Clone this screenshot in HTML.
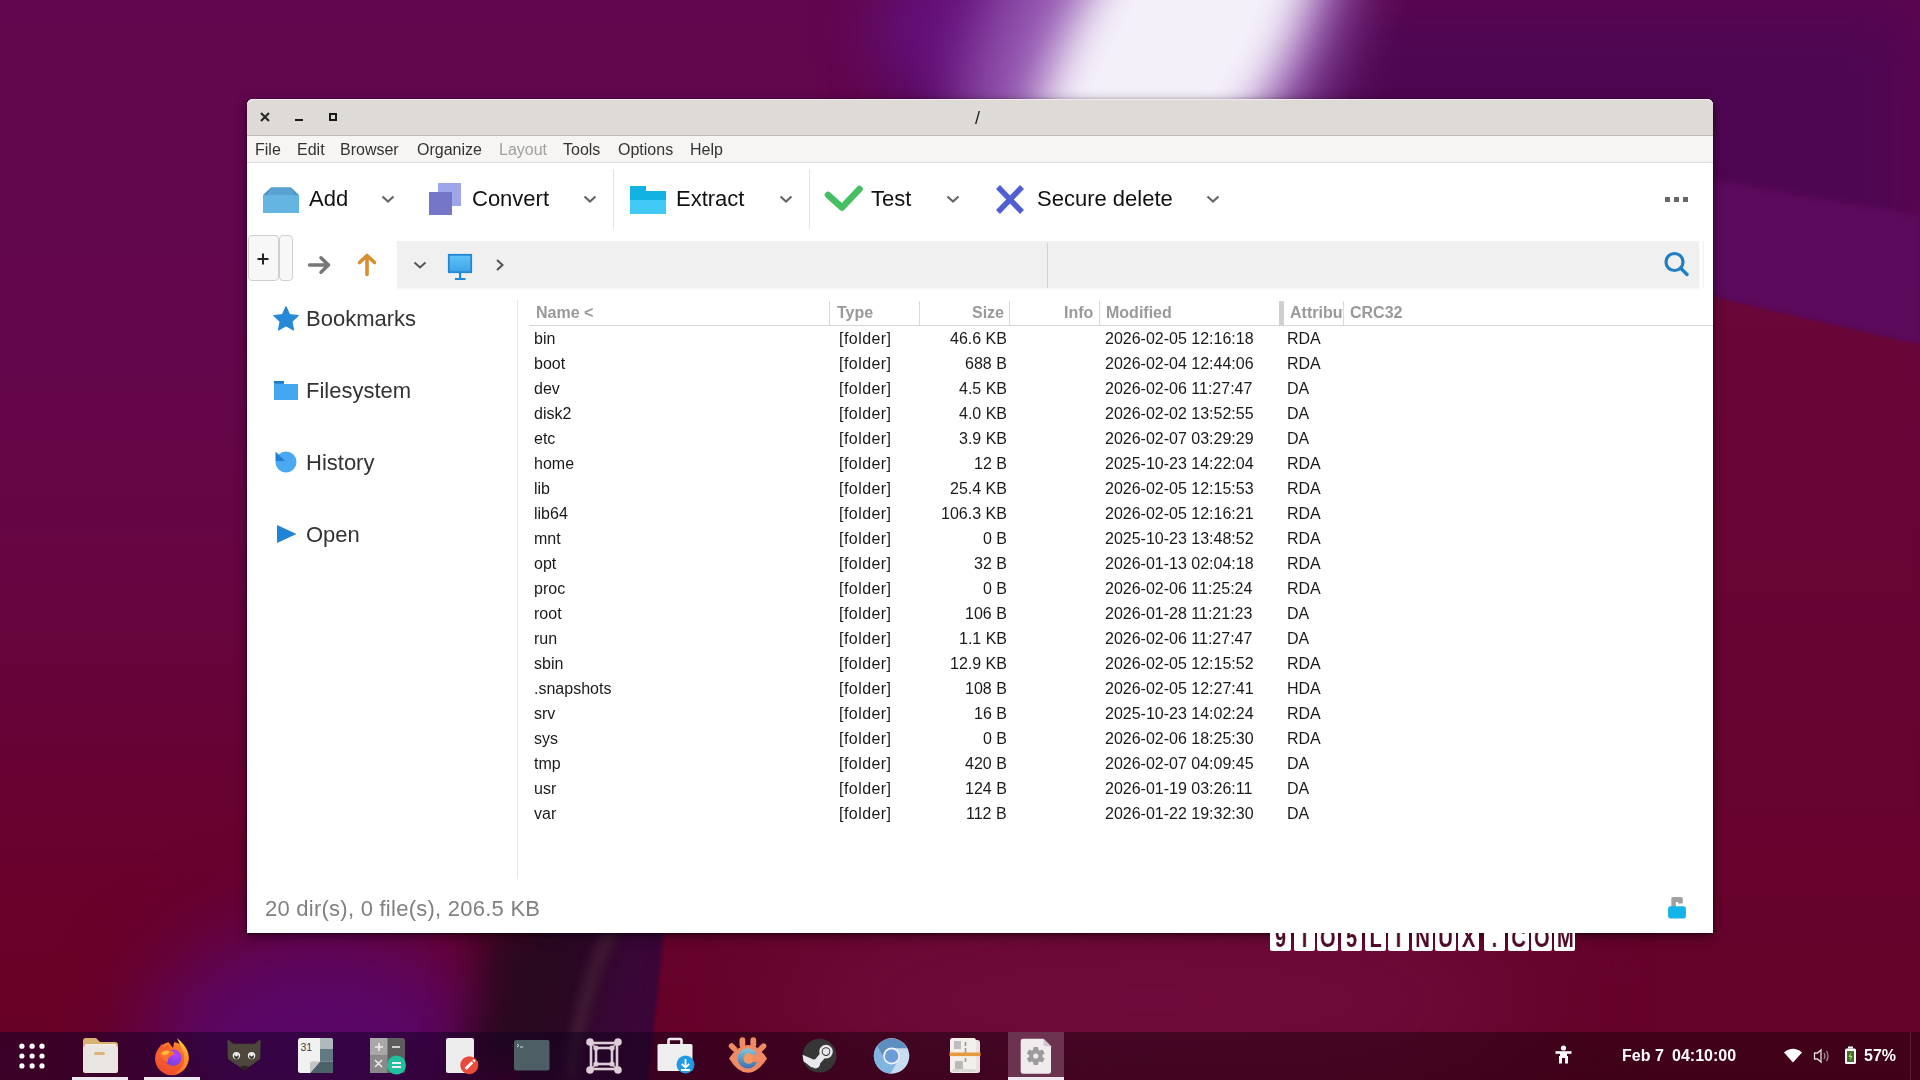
<!DOCTYPE html><html><head><meta charset="utf-8"><style>
html,body{margin:0;padding:0;}
body{width:1920px;height:1080px;overflow:hidden;position:relative;font-family:"Liberation Sans", sans-serif;background:#640a50;}
.t{position:absolute;white-space:nowrap;line-height:normal;will-change:transform;}
</style></head><body>
<svg style="position:absolute;left:0;top:0" width="1920" height="1080" viewBox="0 0 1920 1080">
<defs>
<linearGradient id="gl" x1="0" y1="0" x2="0" y2="1">
<stop offset="0" stop-color="#62064f"/><stop offset="0.3" stop-color="#63064c"/><stop offset="0.55" stop-color="#660540"/><stop offset="0.75" stop-color="#680230"/><stop offset="0.9" stop-color="#690026"/><stop offset="1" stop-color="#660226"/>
</linearGradient>
<linearGradient id="gr" x1="0" y1="0" x2="0" y2="1">
<stop offset="0" stop-color="#6a0638"/><stop offset="0.45" stop-color="#680432"/><stop offset="1" stop-color="#650228"/>
</linearGradient>
<filter id="b30_1" color-interpolation-filters="sRGB" filterUnits="userSpaceOnUse" x="-300" y="-300" width="2520" height="1680"><feGaussianBlur stdDeviation="30"/></filter>
<filter id="b4_2" color-interpolation-filters="sRGB" filterUnits="userSpaceOnUse" x="-300" y="-300" width="2520" height="1680"><feGaussianBlur stdDeviation="3"/></filter>
<filter id="b30_3" color-interpolation-filters="sRGB" filterUnits="userSpaceOnUse" x="-300" y="-300" width="2520" height="1680"><feGaussianBlur stdDeviation="30"/></filter>
<filter id="b4_4" color-interpolation-filters="sRGB" filterUnits="userSpaceOnUse" x="-300" y="-300" width="2520" height="1680"><feGaussianBlur stdDeviation="3"/></filter>
<filter id="b60_5" color-interpolation-filters="sRGB" filterUnits="userSpaceOnUse" x="-300" y="-300" width="2520" height="1680"><feGaussianBlur stdDeviation="60"/></filter>
<filter id="b60_6" color-interpolation-filters="sRGB" filterUnits="userSpaceOnUse" x="-300" y="-300" width="2520" height="1680"><feGaussianBlur stdDeviation="60"/></filter>
<filter id="b25_7" color-interpolation-filters="sRGB" filterUnits="userSpaceOnUse" x="-300" y="-300" width="2520" height="1680"><feGaussianBlur stdDeviation="22"/></filter>
<filter id="b4_8" color-interpolation-filters="sRGB" filterUnits="userSpaceOnUse" x="-300" y="-300" width="2520" height="1680"><feGaussianBlur stdDeviation="3"/></filter>
<filter id="b30_9" color-interpolation-filters="sRGB" filterUnits="userSpaceOnUse" x="-300" y="-300" width="2520" height="1680"><feGaussianBlur stdDeviation="30"/></filter>
<filter id="b25_10" color-interpolation-filters="sRGB" filterUnits="userSpaceOnUse" x="-300" y="-300" width="2520" height="1680"><feGaussianBlur stdDeviation="22"/></filter>
<filter id="bx1" color-interpolation-filters="sRGB" filterUnits="userSpaceOnUse" x="-300" y="-300" width="2520" height="1680"><feGaussianBlur stdDeviation="45"/></filter>
<filter id="bx2" color-interpolation-filters="sRGB" filterUnits="userSpaceOnUse" x="-300" y="-300" width="2520" height="1680"><feGaussianBlur stdDeviation="22"/></filter>
<filter id="bx3" color-interpolation-filters="sRGB" filterUnits="userSpaceOnUse" x="-300" y="-300" width="2520" height="1680"><feGaussianBlur stdDeviation="5"/></filter>
<filter id="bx4" color-interpolation-filters="sRGB" filterUnits="userSpaceOnUse" x="-300" y="-300" width="2520" height="1680"><feGaussianBlur stdDeviation="1.5"/></filter>
<filter id="bx5" color-interpolation-filters="sRGB" filterUnits="userSpaceOnUse" x="-300" y="-300" width="2520" height="1680"><feGaussianBlur stdDeviation="60"/></filter>
</defs>
<rect width="1920" height="1080" fill="url(#gl)"/>
<!-- dark purple top right -->
<path d="M900 0 H1920 V345 L1713 297 L1300 200 L900 120 Z" fill="#4f0652" filter="url(#b30_1)"/>
<!-- lighter purple band right -->
<path d="M1713 180 L1920 215 L1920 345 L1713 297 L1400 230 L1400 150 Z" fill="#5c0a5c" filter="url(#b4_2)"/>
<!-- violet left of glow -->
<ellipse cx="995" cy="30" rx="120" ry="90" fill="#64107a" filter="url(#b30_3)"/>
<!-- purple blob bottom left -->
<ellipse cx="320" cy="1040" rx="175" ry="115" fill="#5a0668" filter="url(#bx1)"/>
<!-- dark purple band -->
<path d="M540 900 L700 900 L652 1080 L520 1080 Z" fill="#3a0738"/>
<!-- dark shadow crescent -->
<path d="M480 920 Q580 915 612 925 Q585 990 570 1080 L455 1080 Q490 1000 480 920 Z" fill="#28081f" filter="url(#bx2)"/>
<path d="M612 930 Q583 985 570 1080" fill="none" stroke="#3f1a32" stroke-width="14" filter="url(#bx3)"/>
<!-- crimson lower right -->
<path d="M1920 345 L1713 297 C1300 220 800 400 664 930 L648 1080 H1920 Z" fill="url(#gr)" filter="url(#bx4)"/>
<!-- magenta lighter lower mid -->
<ellipse cx="1150" cy="1000" rx="380" ry="90" fill="#700c3c" filter="url(#bx5)"/>
<!-- glow -->
<g transform="rotate(31 1172 40)">
<ellipse cx="1160" cy="40" rx="165" ry="270" fill="#9a60b8" filter="url(#b30_9)" opacity="0.9"/>
<ellipse cx="1178" cy="40" rx="102" ry="230" fill="#f4f0fa" filter="url(#b25_10)"/>
</g>
</svg><div style="position:absolute;left:247px;top:99px;width:1466px;height:834px;border-radius:6px 6px 0 0;box-shadow:0 3px 12px rgba(0,0,0,0.5),0 1px 3px rgba(0,0,0,0.4);background:#fff;"></div><div style="position:absolute;left:1270px;top:915px;width:21px;height:36px;background:#fff;border-radius:2px;overflow:hidden;"><div class="t" style="left:0;width:21px;text-align:center;top:7px;font-size:28px;font-weight:bold;color:#4e0a28;transform:scaleX(0.72);">9</div></div><div style="position:absolute;left:1294px;top:915px;width:21px;height:36px;background:#fff;border-radius:2px;overflow:hidden;"><div class="t" style="left:0;width:21px;text-align:center;top:7px;font-size:28px;font-weight:bold;color:#4e0a28;transform:scaleX(0.72);">T</div></div><div style="position:absolute;left:1317px;top:915px;width:21px;height:36px;background:#fff;border-radius:2px;overflow:hidden;"><div class="t" style="left:0;width:21px;text-align:center;top:7px;font-size:28px;font-weight:bold;color:#4e0a28;transform:scaleX(0.72);">O</div></div><div style="position:absolute;left:1341px;top:915px;width:21px;height:36px;background:#fff;border-radius:2px;overflow:hidden;"><div class="t" style="left:0;width:21px;text-align:center;top:7px;font-size:28px;font-weight:bold;color:#4e0a28;transform:scaleX(0.72);">5</div></div><div style="position:absolute;left:1365px;top:915px;width:21px;height:36px;background:#fff;border-radius:2px;overflow:hidden;"><div class="t" style="left:0;width:21px;text-align:center;top:7px;font-size:28px;font-weight:bold;color:#4e0a28;transform:scaleX(0.72);">L</div></div><div style="position:absolute;left:1388px;top:915px;width:21px;height:36px;background:#fff;border-radius:2px;overflow:hidden;"><div class="t" style="left:0;width:21px;text-align:center;top:7px;font-size:28px;font-weight:bold;color:#4e0a28;transform:scaleX(0.72);">I</div></div><div style="position:absolute;left:1412px;top:915px;width:21px;height:36px;background:#fff;border-radius:2px;overflow:hidden;"><div class="t" style="left:0;width:21px;text-align:center;top:7px;font-size:28px;font-weight:bold;color:#4e0a28;transform:scaleX(0.72);">N</div></div><div style="position:absolute;left:1435px;top:915px;width:21px;height:36px;background:#fff;border-radius:2px;overflow:hidden;"><div class="t" style="left:0;width:21px;text-align:center;top:7px;font-size:28px;font-weight:bold;color:#4e0a28;transform:scaleX(0.72);">U</div></div><div style="position:absolute;left:1458px;top:915px;width:21px;height:36px;background:#fff;border-radius:2px;overflow:hidden;"><div class="t" style="left:0;width:21px;text-align:center;top:7px;font-size:28px;font-weight:bold;color:#4e0a28;transform:scaleX(0.72);">X</div></div><div style="position:absolute;left:1484px;top:915px;width:21px;height:36px;background:#fff;border-radius:2px;overflow:hidden;"><div class="t" style="left:0;width:21px;text-align:center;top:7px;font-size:28px;font-weight:bold;color:#4e0a28;transform:scaleX(0.72);">.</div></div><div style="position:absolute;left:1508px;top:915px;width:21px;height:36px;background:#fff;border-radius:2px;overflow:hidden;"><div class="t" style="left:0;width:21px;text-align:center;top:7px;font-size:28px;font-weight:bold;color:#4e0a28;transform:scaleX(0.72);">C</div></div><div style="position:absolute;left:1531px;top:915px;width:21px;height:36px;background:#fff;border-radius:2px;overflow:hidden;"><div class="t" style="left:0;width:21px;text-align:center;top:7px;font-size:28px;font-weight:bold;color:#4e0a28;transform:scaleX(0.72);">O</div></div><div style="position:absolute;left:1554px;top:915px;width:21px;height:36px;background:#fff;border-radius:2px;overflow:hidden;"><div class="t" style="left:0;width:21px;text-align:center;top:7px;font-size:28px;font-weight:bold;color:#4e0a28;transform:scaleX(0.72);">M</div></div><div style="position:absolute;left:247px;top:99px;width:1466px;height:834px;border-radius:6px 6px 0 0;background:#fff;"></div><div style="position:absolute;left:247px;top:99px;width:1466px;height:36px;border-radius:6px 6px 0 0;background:#dedad6;box-shadow:inset 0 1px 0 rgba(255,240,255,0.7);"></div><div style="position:absolute;left:247px;top:135px;width:1466px;height:27px;background:#f6f5f4;border-top:1px solid #c2bdb8;box-sizing:border-box;"></div><div style="position:absolute;left:247px;top:162px;width:1466px;height:1px;background:#dcdcdc;"></div><svg style="position:absolute;left:259px;top:111px;" width="12" height="12" viewBox="0 0 12 12"><path d="M2 2 L10 10 M10 2 L2 10" stroke="#2a2a2a" stroke-width="2.2" stroke-linecap="butt"/></svg><div style="position:absolute;left:295px;top:119px;width:8px;height:2px;background:#1a1a1a;"></div><div style="position:absolute;left:329px;top:113px;width:8px;height:8px;border:2px solid #1a1a1a;box-sizing:border-box;"></div><div class="t " style="left:975px;top:108px;font-size:18px;color:#222;font-weight:normal;">/</div><div class="t " style="left:255px;top:141px;font-size:16px;color:#333;font-weight:normal;">File</div><div class="t " style="left:297px;top:141px;font-size:16px;color:#333;font-weight:normal;">Edit</div><div class="t " style="left:340px;top:141px;font-size:16px;color:#333;font-weight:normal;">Browser</div><div class="t " style="left:417px;top:141px;font-size:16px;color:#333;font-weight:normal;">Organize</div><div class="t " style="left:499px;top:141px;font-size:16px;color:#a0a0a0;font-weight:normal;">Layout</div><div class="t " style="left:563px;top:141px;font-size:16px;color:#333;font-weight:normal;">Tools</div><div class="t " style="left:618px;top:141px;font-size:16px;color:#333;font-weight:normal;">Options</div><div class="t " style="left:690px;top:141px;font-size:16px;color:#333;font-weight:normal;">Help</div><div style="position:absolute;left:613px;top:169px;width:1px;height:60px;background:#e4e4e4;"></div><div style="position:absolute;left:809px;top:169px;width:1px;height:60px;background:#e4e4e4;"></div><svg style="position:absolute;left:263px;top:187px;" width="36" height="26" viewBox="0 0 36 26"><path d="M0 8 L8 0.5 L28 0.5 L36 8 Z" fill="#4a93c0"/><path d="M4 8 L8 0.5 L28 0.5 L32 8 Z" fill="#5aa2cf"/><rect x="0" y="8" width="36" height="18" fill="#64b5e2"/></svg><div class="t " style="left:309px;top:186px;font-size:22px;color:#111;font-weight:normal;">Add</div><svg style="position:absolute;left:381px;top:194px;" width="14" height="10" viewBox="0 0 14 10"><path d="M1.5 2.5 L7.0 7.5 L12.5 2.5" fill="none" stroke="#666" stroke-width="2.2" stroke-linecap="butt" stroke-linejoin="miter"/></svg><svg style="position:absolute;left:429px;top:183px;" width="32" height="32" viewBox="0 0 32 32"><rect x="9" y="0" width="23" height="23" fill="#9ea6ea"/><rect x="0" y="9" width="23" height="23" fill="#7676c8"/></svg><div class="t " style="left:472px;top:186px;font-size:22px;color:#111;font-weight:normal;">Convert</div><svg style="position:absolute;left:583px;top:194px;" width="14" height="10" viewBox="0 0 14 10"><path d="M1.5 2.5 L7.0 7.5 L12.5 2.5" fill="none" stroke="#666" stroke-width="2.2" stroke-linecap="butt" stroke-linejoin="miter"/></svg><svg style="position:absolute;left:630px;top:186px;" width="36" height="28" viewBox="0 0 36 28"><path d="M0 0 H16 V5 H36 V14 H0 Z" fill="#12b2e2"/><rect x="0" y="14" width="36" height="14" fill="#42c8f4"/></svg><div class="t " style="left:676px;top:186px;font-size:22px;color:#111;font-weight:normal;">Extract</div><svg style="position:absolute;left:779px;top:194px;" width="14" height="10" viewBox="0 0 14 10"><path d="M1.5 2.5 L7.0 7.5 L12.5 2.5" fill="none" stroke="#666" stroke-width="2.2" stroke-linecap="butt" stroke-linejoin="miter"/></svg><svg style="position:absolute;left:824px;top:185px;" width="40" height="28" viewBox="0 0 40 28"><path d="M4 10 L18 22.5 L35.5 4" fill="none" stroke="#46bf63" stroke-width="6.5" stroke-linecap="round" stroke-linejoin="round"/></svg><div class="t " style="left:871px;top:186px;font-size:22px;color:#111;font-weight:normal;">Test</div><svg style="position:absolute;left:946px;top:194px;" width="14" height="10" viewBox="0 0 14 10"><path d="M1.5 2.5 L7.0 7.5 L12.5 2.5" fill="none" stroke="#666" stroke-width="2.2" stroke-linecap="butt" stroke-linejoin="miter"/></svg><svg style="position:absolute;left:994px;top:183px;" width="32" height="33" viewBox="0 0 32 33"><path d="M4 4 L28 29 M28 4 L4 29" stroke="#4f5fd2" stroke-width="5.5" stroke-linecap="butt"/></svg><div class="t " style="left:1037px;top:186px;font-size:22px;color:#111;font-weight:normal;">Secure delete</div><svg style="position:absolute;left:1206px;top:194px;" width="14" height="10" viewBox="0 0 14 10"><path d="M1.5 2.5 L7.0 7.5 L12.5 2.5" fill="none" stroke="#666" stroke-width="2.2" stroke-linecap="butt" stroke-linejoin="miter"/></svg><div style="position:absolute;left:1665px;top:197px;width:5px;height:5px;background:#666;"></div><div style="position:absolute;left:1674px;top:197px;width:5px;height:5px;background:#666;"></div><div style="position:absolute;left:1683px;top:197px;width:5px;height:5px;background:#666;"></div><div style="position:absolute;left:248px;top:235px;width:31px;height:46px;border:1px solid #cfcfcf;border-radius:4px;background:#f7f7f7;box-sizing:border-box;"></div><div style="position:absolute;left:279px;top:235px;width:14px;height:46px;border:1px solid #cfcfcf;border-radius:4px;background:#f7f7f7;box-sizing:border-box;"></div><svg style="position:absolute;left:257px;top:253px;" width="12" height="12" viewBox="0 0 12 12"><path d="M6 0.5 V11.5 M0.5 6 H11.5" stroke="#222" stroke-width="2"/></svg><svg style="position:absolute;left:307px;top:255px;" width="25" height="20" viewBox="0 0 25 20"><path d="M2.5 10 H21.5 M14 2.8 L21.5 10 L14 17.2" fill="none" stroke="#777" stroke-width="3.5" stroke-linecap="round" stroke-linejoin="round"/></svg><svg style="position:absolute;left:356px;top:252px;" width="22" height="25" viewBox="0 0 22 25"><path d="M11 22.5 V3.5 M3.5 10.5 L11 3.5 L18.5 10.5" fill="none" stroke="#d88e2e" stroke-width="3.6" stroke-linecap="round" stroke-linejoin="round"/></svg><div style="position:absolute;left:397px;top:241px;width:1302px;height:47px;background:#f0f0f0;box-shadow:0 1px 2px rgba(0,0,0,0.05);"></div><div style="position:absolute;left:1047px;top:243px;width:1px;height:45px;background:#d0d0d0;"></div><svg style="position:absolute;left:413px;top:260px;" width="14" height="10" viewBox="0 0 14 10"><path d="M1.5 2.5 L7.0 7.5 L12.5 2.5" fill="none" stroke="#555" stroke-width="2" stroke-linecap="butt" stroke-linejoin="miter"/></svg><svg style="position:absolute;left:447px;top:253px;" width="27" height="29" viewBox="0 0 27 29"><defs><linearGradient id="mon" x1="0" y1="0" x2="0" y2="1"><stop offset="0" stop-color="#62c4f6"/><stop offset="1" stop-color="#3ba4e8"/></linearGradient></defs><rect x="1.8" y="1.8" width="22.4" height="17.4" fill="url(#mon)" stroke="#2388d2" stroke-width="1.8"/><rect x="12" y="19" width="2.2" height="6" fill="#2388d2"/><rect x="8" y="25" width="10.5" height="2" fill="#2388d2"/></svg><svg style="position:absolute;left:495px;top:258px;" width="10" height="14" viewBox="0 0 10 14"><path d="M2 2 L7.5 7 L2 12" fill="none" stroke="#555" stroke-width="2"/></svg><svg style="position:absolute;left:1660px;top:248px;" width="32" height="32" viewBox="0 0 32 32"><circle cx="14.5" cy="14" r="8.5" fill="none" stroke="#1f7fc2" stroke-width="3.2"/><path d="M20.5 20 L27 26.5" stroke="#1f7fc2" stroke-width="3.4" stroke-linecap="round"/></svg><div style="position:absolute;left:1703px;top:241px;width:1px;height:47px;background:#f2f2f2;"></div><div style="position:absolute;left:517px;top:300px;width:1px;height:579px;background:#e6e6e6;"></div><svg style="position:absolute;left:272px;top:305px;" width="28" height="28" viewBox="0 0 28 28"><polygon points="14.00,1.80 17.59,9.66 26.17,10.64 19.80,16.49 21.52,24.96 14.00,20.70 6.48,24.96 8.20,16.49 1.83,10.64 10.41,9.66" fill="#2588d8" stroke="#2588d8" stroke-width="1.2" stroke-linejoin="round"/></svg><div class="t " style="left:306px;top:306px;font-size:22px;color:#333;font-weight:normal;">Bookmarks</div><svg style="position:absolute;left:274px;top:381px;" width="24" height="19" viewBox="0 0 24 19"><path d="M0 0.5 H10 V3 H24 V19 H0 Z" fill="#44a6f0"/><rect x="0" y="0" width="10" height="2.6" fill="#1e78c2"/></svg><div class="t " style="left:306px;top:378px;font-size:22px;color:#333;font-weight:normal;">Filesystem</div><svg style="position:absolute;left:274px;top:450px;" width="24" height="24" viewBox="0 0 24 24"><circle cx="12" cy="12" r="10.5" fill="#4aa9f1"/><path d="M1.5 1.5 L1.5 11 L11 11 Z" fill="#1e80d2"/></svg><div class="t " style="left:306px;top:450px;font-size:22px;color:#333;font-weight:normal;">History</div><svg style="position:absolute;left:276px;top:524px;" width="22" height="20" viewBox="0 0 22 20"><path d="M1 1 L20.5 10 L1 19 Z" fill="#1f83d8"/></svg><div class="t " style="left:306px;top:522px;font-size:22px;color:#333;font-weight:normal;">Open</div><div style="position:absolute;left:529px;top:325px;width:1184px;height:1px;background:#d6d6d6;"></div><div style="position:absolute;left:829px;top:301px;width:1px;height:24px;background:#dadada;"></div><div style="position:absolute;left:919px;top:301px;width:1px;height:24px;background:#dadada;"></div><div style="position:absolute;left:1009px;top:301px;width:1px;height:24px;background:#dadada;"></div><div style="position:absolute;left:1099px;top:301px;width:1px;height:24px;background:#dadada;"></div><div style="position:absolute;left:1343px;top:301px;width:1px;height:24px;background:#dadada;"></div><div style="position:absolute;left:1279px;top:301px;width:5px;height:24px;background:#cfcfcf;"></div><div class="t " style="left:536px;top:304px;font-size:16px;color:#999;font-weight:bold;">Name &lt;</div><div class="t " style="left:837px;top:304px;font-size:16px;color:#999;font-weight:bold;">Type</div><div class="t " style="right:916px;top:304px;font-size:16px;color:#999;font-weight:bold;">Size</div><div class="t " style="right:827px;top:304px;font-size:16px;color:#999;font-weight:bold;">Info</div><div class="t " style="left:1106px;top:304px;font-size:16px;color:#999;font-weight:bold;">Modified</div><div style="position:absolute;left:1290px;top:300px;width:53px;height:24px;overflow:hidden;"><div class="t" style="left:0;top:4px;font-size:16px;color:#999;font-weight:bold;">Attributes</div></div><div class="t " style="left:1350px;top:304px;font-size:16px;color:#999;font-weight:bold;">CRC32</div><div class="t " style="left:534px;top:330px;font-size:16px;color:#1a1a1a;font-weight:normal;">bin</div><div class="t " style="left:839px;top:330px;font-size:16px;color:#1a1a1a;font-weight:normal;letter-spacing:0.45px;">[folder]</div><div class="t " style="right:913px;top:330px;font-size:16px;color:#1a1a1a;font-weight:normal;">46.6 KB</div><div class="t " style="left:1105px;top:330px;font-size:16px;color:#1a1a1a;font-weight:normal;">2026-02-05 12:16:18</div><div class="t " style="left:1287px;top:330px;font-size:16px;color:#1a1a1a;font-weight:normal;">RDA</div><div class="t " style="left:534px;top:355px;font-size:16px;color:#1a1a1a;font-weight:normal;">boot</div><div class="t " style="left:839px;top:355px;font-size:16px;color:#1a1a1a;font-weight:normal;letter-spacing:0.45px;">[folder]</div><div class="t " style="right:913px;top:355px;font-size:16px;color:#1a1a1a;font-weight:normal;">688 B</div><div class="t " style="left:1105px;top:355px;font-size:16px;color:#1a1a1a;font-weight:normal;">2026-02-04 12:44:06</div><div class="t " style="left:1287px;top:355px;font-size:16px;color:#1a1a1a;font-weight:normal;">RDA</div><div class="t " style="left:534px;top:380px;font-size:16px;color:#1a1a1a;font-weight:normal;">dev</div><div class="t " style="left:839px;top:380px;font-size:16px;color:#1a1a1a;font-weight:normal;letter-spacing:0.45px;">[folder]</div><div class="t " style="right:913px;top:380px;font-size:16px;color:#1a1a1a;font-weight:normal;">4.5 KB</div><div class="t " style="left:1105px;top:380px;font-size:16px;color:#1a1a1a;font-weight:normal;">2026-02-06 11:27:47</div><div class="t " style="left:1287px;top:380px;font-size:16px;color:#1a1a1a;font-weight:normal;">DA</div><div class="t " style="left:534px;top:405px;font-size:16px;color:#1a1a1a;font-weight:normal;">disk2</div><div class="t " style="left:839px;top:405px;font-size:16px;color:#1a1a1a;font-weight:normal;letter-spacing:0.45px;">[folder]</div><div class="t " style="right:913px;top:405px;font-size:16px;color:#1a1a1a;font-weight:normal;">4.0 KB</div><div class="t " style="left:1105px;top:405px;font-size:16px;color:#1a1a1a;font-weight:normal;">2026-02-02 13:52:55</div><div class="t " style="left:1287px;top:405px;font-size:16px;color:#1a1a1a;font-weight:normal;">DA</div><div class="t " style="left:534px;top:430px;font-size:16px;color:#1a1a1a;font-weight:normal;">etc</div><div class="t " style="left:839px;top:430px;font-size:16px;color:#1a1a1a;font-weight:normal;letter-spacing:0.45px;">[folder]</div><div class="t " style="right:913px;top:430px;font-size:16px;color:#1a1a1a;font-weight:normal;">3.9 KB</div><div class="t " style="left:1105px;top:430px;font-size:16px;color:#1a1a1a;font-weight:normal;">2026-02-07 03:29:29</div><div class="t " style="left:1287px;top:430px;font-size:16px;color:#1a1a1a;font-weight:normal;">DA</div><div class="t " style="left:534px;top:455px;font-size:16px;color:#1a1a1a;font-weight:normal;">home</div><div class="t " style="left:839px;top:455px;font-size:16px;color:#1a1a1a;font-weight:normal;letter-spacing:0.45px;">[folder]</div><div class="t " style="right:913px;top:455px;font-size:16px;color:#1a1a1a;font-weight:normal;">12 B</div><div class="t " style="left:1105px;top:455px;font-size:16px;color:#1a1a1a;font-weight:normal;">2025-10-23 14:22:04</div><div class="t " style="left:1287px;top:455px;font-size:16px;color:#1a1a1a;font-weight:normal;">RDA</div><div class="t " style="left:534px;top:480px;font-size:16px;color:#1a1a1a;font-weight:normal;">lib</div><div class="t " style="left:839px;top:480px;font-size:16px;color:#1a1a1a;font-weight:normal;letter-spacing:0.45px;">[folder]</div><div class="t " style="right:913px;top:480px;font-size:16px;color:#1a1a1a;font-weight:normal;">25.4 KB</div><div class="t " style="left:1105px;top:480px;font-size:16px;color:#1a1a1a;font-weight:normal;">2026-02-05 12:15:53</div><div class="t " style="left:1287px;top:480px;font-size:16px;color:#1a1a1a;font-weight:normal;">RDA</div><div class="t " style="left:534px;top:505px;font-size:16px;color:#1a1a1a;font-weight:normal;">lib64</div><div class="t " style="left:839px;top:505px;font-size:16px;color:#1a1a1a;font-weight:normal;letter-spacing:0.45px;">[folder]</div><div class="t " style="right:913px;top:505px;font-size:16px;color:#1a1a1a;font-weight:normal;">106.3 KB</div><div class="t " style="left:1105px;top:505px;font-size:16px;color:#1a1a1a;font-weight:normal;">2026-02-05 12:16:21</div><div class="t " style="left:1287px;top:505px;font-size:16px;color:#1a1a1a;font-weight:normal;">RDA</div><div class="t " style="left:534px;top:530px;font-size:16px;color:#1a1a1a;font-weight:normal;">mnt</div><div class="t " style="left:839px;top:530px;font-size:16px;color:#1a1a1a;font-weight:normal;letter-spacing:0.45px;">[folder]</div><div class="t " style="right:913px;top:530px;font-size:16px;color:#1a1a1a;font-weight:normal;">0 B</div><div class="t " style="left:1105px;top:530px;font-size:16px;color:#1a1a1a;font-weight:normal;">2025-10-23 13:48:52</div><div class="t " style="left:1287px;top:530px;font-size:16px;color:#1a1a1a;font-weight:normal;">RDA</div><div class="t " style="left:534px;top:555px;font-size:16px;color:#1a1a1a;font-weight:normal;">opt</div><div class="t " style="left:839px;top:555px;font-size:16px;color:#1a1a1a;font-weight:normal;letter-spacing:0.45px;">[folder]</div><div class="t " style="right:913px;top:555px;font-size:16px;color:#1a1a1a;font-weight:normal;">32 B</div><div class="t " style="left:1105px;top:555px;font-size:16px;color:#1a1a1a;font-weight:normal;">2026-01-13 02:04:18</div><div class="t " style="left:1287px;top:555px;font-size:16px;color:#1a1a1a;font-weight:normal;">RDA</div><div class="t " style="left:534px;top:580px;font-size:16px;color:#1a1a1a;font-weight:normal;">proc</div><div class="t " style="left:839px;top:580px;font-size:16px;color:#1a1a1a;font-weight:normal;letter-spacing:0.45px;">[folder]</div><div class="t " style="right:913px;top:580px;font-size:16px;color:#1a1a1a;font-weight:normal;">0 B</div><div class="t " style="left:1105px;top:580px;font-size:16px;color:#1a1a1a;font-weight:normal;">2026-02-06 11:25:24</div><div class="t " style="left:1287px;top:580px;font-size:16px;color:#1a1a1a;font-weight:normal;">RDA</div><div class="t " style="left:534px;top:605px;font-size:16px;color:#1a1a1a;font-weight:normal;">root</div><div class="t " style="left:839px;top:605px;font-size:16px;color:#1a1a1a;font-weight:normal;letter-spacing:0.45px;">[folder]</div><div class="t " style="right:913px;top:605px;font-size:16px;color:#1a1a1a;font-weight:normal;">106 B</div><div class="t " style="left:1105px;top:605px;font-size:16px;color:#1a1a1a;font-weight:normal;">2026-01-28 11:21:23</div><div class="t " style="left:1287px;top:605px;font-size:16px;color:#1a1a1a;font-weight:normal;">DA</div><div class="t " style="left:534px;top:630px;font-size:16px;color:#1a1a1a;font-weight:normal;">run</div><div class="t " style="left:839px;top:630px;font-size:16px;color:#1a1a1a;font-weight:normal;letter-spacing:0.45px;">[folder]</div><div class="t " style="right:913px;top:630px;font-size:16px;color:#1a1a1a;font-weight:normal;">1.1 KB</div><div class="t " style="left:1105px;top:630px;font-size:16px;color:#1a1a1a;font-weight:normal;">2026-02-06 11:27:47</div><div class="t " style="left:1287px;top:630px;font-size:16px;color:#1a1a1a;font-weight:normal;">DA</div><div class="t " style="left:534px;top:655px;font-size:16px;color:#1a1a1a;font-weight:normal;">sbin</div><div class="t " style="left:839px;top:655px;font-size:16px;color:#1a1a1a;font-weight:normal;letter-spacing:0.45px;">[folder]</div><div class="t " style="right:913px;top:655px;font-size:16px;color:#1a1a1a;font-weight:normal;">12.9 KB</div><div class="t " style="left:1105px;top:655px;font-size:16px;color:#1a1a1a;font-weight:normal;">2026-02-05 12:15:52</div><div class="t " style="left:1287px;top:655px;font-size:16px;color:#1a1a1a;font-weight:normal;">RDA</div><div class="t " style="left:534px;top:680px;font-size:16px;color:#1a1a1a;font-weight:normal;">.snapshots</div><div class="t " style="left:839px;top:680px;font-size:16px;color:#1a1a1a;font-weight:normal;letter-spacing:0.45px;">[folder]</div><div class="t " style="right:913px;top:680px;font-size:16px;color:#1a1a1a;font-weight:normal;">108 B</div><div class="t " style="left:1105px;top:680px;font-size:16px;color:#1a1a1a;font-weight:normal;">2026-02-05 12:27:41</div><div class="t " style="left:1287px;top:680px;font-size:16px;color:#1a1a1a;font-weight:normal;">HDA</div><div class="t " style="left:534px;top:705px;font-size:16px;color:#1a1a1a;font-weight:normal;">srv</div><div class="t " style="left:839px;top:705px;font-size:16px;color:#1a1a1a;font-weight:normal;letter-spacing:0.45px;">[folder]</div><div class="t " style="right:913px;top:705px;font-size:16px;color:#1a1a1a;font-weight:normal;">16 B</div><div class="t " style="left:1105px;top:705px;font-size:16px;color:#1a1a1a;font-weight:normal;">2025-10-23 14:02:24</div><div class="t " style="left:1287px;top:705px;font-size:16px;color:#1a1a1a;font-weight:normal;">RDA</div><div class="t " style="left:534px;top:730px;font-size:16px;color:#1a1a1a;font-weight:normal;">sys</div><div class="t " style="left:839px;top:730px;font-size:16px;color:#1a1a1a;font-weight:normal;letter-spacing:0.45px;">[folder]</div><div class="t " style="right:913px;top:730px;font-size:16px;color:#1a1a1a;font-weight:normal;">0 B</div><div class="t " style="left:1105px;top:730px;font-size:16px;color:#1a1a1a;font-weight:normal;">2026-02-06 18:25:30</div><div class="t " style="left:1287px;top:730px;font-size:16px;color:#1a1a1a;font-weight:normal;">RDA</div><div class="t " style="left:534px;top:755px;font-size:16px;color:#1a1a1a;font-weight:normal;">tmp</div><div class="t " style="left:839px;top:755px;font-size:16px;color:#1a1a1a;font-weight:normal;letter-spacing:0.45px;">[folder]</div><div class="t " style="right:913px;top:755px;font-size:16px;color:#1a1a1a;font-weight:normal;">420 B</div><div class="t " style="left:1105px;top:755px;font-size:16px;color:#1a1a1a;font-weight:normal;">2026-02-07 04:09:45</div><div class="t " style="left:1287px;top:755px;font-size:16px;color:#1a1a1a;font-weight:normal;">DA</div><div class="t " style="left:534px;top:780px;font-size:16px;color:#1a1a1a;font-weight:normal;">usr</div><div class="t " style="left:839px;top:780px;font-size:16px;color:#1a1a1a;font-weight:normal;letter-spacing:0.45px;">[folder]</div><div class="t " style="right:913px;top:780px;font-size:16px;color:#1a1a1a;font-weight:normal;">124 B</div><div class="t " style="left:1105px;top:780px;font-size:16px;color:#1a1a1a;font-weight:normal;">2026-01-19 03:26:11</div><div class="t " style="left:1287px;top:780px;font-size:16px;color:#1a1a1a;font-weight:normal;">DA</div><div class="t " style="left:534px;top:805px;font-size:16px;color:#1a1a1a;font-weight:normal;">var</div><div class="t " style="left:839px;top:805px;font-size:16px;color:#1a1a1a;font-weight:normal;letter-spacing:0.45px;">[folder]</div><div class="t " style="right:913px;top:805px;font-size:16px;color:#1a1a1a;font-weight:normal;">112 B</div><div class="t " style="left:1105px;top:805px;font-size:16px;color:#1a1a1a;font-weight:normal;">2026-01-22 19:32:30</div><div class="t " style="left:1287px;top:805px;font-size:16px;color:#1a1a1a;font-weight:normal;">DA</div><div class="t " style="left:265px;top:896px;font-size:22px;color:#808080;font-weight:normal;letter-spacing:0.25px;">20 dir(s), 0 file(s), 206.5 KB</div><svg style="position:absolute;left:1666px;top:895px;" width="22" height="25" viewBox="0 0 22 25"><path d="M5.3 12 V4 Q5.3 2 7.3 2 H14.8 Q16.8 2 16.8 4 V8.6 H12 V7 H9.9 V12 Z" fill="#a0a0a0"/><rect x="2.1" y="11.2" width="17.8" height="12.3" rx="2.5" fill="#14b4e8"/></svg><div style="position:absolute;left:0;top:1032px;width:1920px;height:48px;background:linear-gradient(90deg,rgba(25,0,40,0.55),rgba(20,0,35,0.52) 25%,rgba(10,0,10,0.44) 45%,rgba(10,0,5,0.42) 70%,rgba(10,0,0,0.4));"></div><div style="position:absolute;left:1910px;top:1032px;width:1px;height:48px;background:rgba(255,255,255,0.12);"></div><svg style="position:absolute;left:0px;top:1032px;" width="64" height="48" viewBox="0 0 64 48"><circle cx="21.9" cy="14.2" r="2.6" fill="#fff"/><circle cx="32.1" cy="14.2" r="2.6" fill="#fff"/><circle cx="42" cy="14.2" r="2.6" fill="#fff"/><circle cx="21.9" cy="24" r="2.6" fill="#fff"/><circle cx="32.1" cy="24" r="2.6" fill="#fff"/><circle cx="42" cy="24" r="2.6" fill="#fff"/><circle cx="21.9" cy="33.9" r="2.6" fill="#fff"/><circle cx="32.1" cy="33.9" r="2.6" fill="#fff"/><circle cx="42" cy="33.9" r="2.6" fill="#fff"/></svg><div style="position:absolute;left:72px;top:1077px;width:56px;height:3px;background:#f0e8f0;"></div><div style="position:absolute;left:144px;top:1077px;width:56px;height:3px;background:#f0e8f0;"></div><div style="position:absolute;left:1008px;top:1032px;width:56px;height:48px;background:rgba(255,220,240,0.22);"></div><div style="position:absolute;left:1008px;top:1077px;width:56px;height:3px;background:#f0e8f0;"></div><svg style="position:absolute;left:82px;top:1037px;" width="38" height="38" viewBox="0 0 38 38"><path d="M1 4 Q1 1 4 1 H14 L18 5 H33 Q36 5 36 8 V20 H1 Z" fill="#d8b274"/><rect x="3" y="7" width="31" height="4" fill="#f2ece0"/><rect x="1" y="9" width="35" height="27" rx="2" fill="#e9e5e1"/><rect x="12" y="15" width="11" height="3" rx="1.5" fill="#dcb47a"/></svg><svg style="position:absolute;left:152px;top:1036px;" width="40" height="40" viewBox="0 0 40 40"><defs><linearGradient id="ffg" x1="0.3" y1="1" x2="0.7" y2="0"><stop offset="0" stop-color="#ec4a2e"/><stop offset="0.7" stop-color="#fb6a2c"/><stop offset="1" stop-color="#ff8a2a"/></linearGradient><linearGradient id="ffy" x1="0" y1="0" x2="0" y2="1"><stop offset="0" stop-color="#ffd23a"/><stop offset="0.5" stop-color="#ff9a2a"/><stop offset="1" stop-color="#ff7a2a"/></linearGradient><radialGradient id="ffp" cx="0.65" cy="0.35" r="0.8"><stop offset="0" stop-color="#b048ff"/><stop offset="1" stop-color="#6f3ad8"/></radialGradient></defs><circle cx="19.7" cy="22.6" r="16.6" fill="url(#ffg)"/><path d="M5.5 16 L9.5 8 L12 12 L15.5 9 L17.5 13 Z" fill="#f25c2a"/><path d="M16.5 6 L22.5 4 L21 12 Z" fill="#3a0032"/><path d="M25 2 C31 7 37.5 14 36.8 23 C36 31 30 37 22 38.8 C30 34 33.5 27 32 19 C31 13 27.5 8.5 25 2 Z" fill="url(#ffy)"/><circle cx="21.2" cy="21.6" r="8.2" fill="url(#ffp)"/><path d="M7 18 C10 14 15 13 19 14.5 C22.5 15.8 23.5 18 21 19 C17.5 20.3 15.5 22.5 15.8 26.5 C12 24.5 9 21.5 7 18 Z" fill="#ff6e2e"/><ellipse cx="13.5" cy="16.8" rx="3.8" ry="1.9" fill="#ffc23a" transform="rotate(-15 13.5 16.8)"/></svg><svg style="position:absolute;left:226px;top:1039px;" width="36" height="34" viewBox="0 0 36 34"><path d="M2.2 1.5 L7.2 5.6 H28.8 L33.8 1.5 L33.4 19.5 L18.4 30.2 L2.6 19.5 Z" fill="#4c473a" stroke="#4c473a" stroke-width="1.6" stroke-linejoin="round"/><circle cx="10.4" cy="16.6" r="3.7" fill="#eeeeee"/><circle cx="25.6" cy="16.6" r="3.7" fill="#eeeeee"/><circle cx="10.4" cy="17.6" r="2.3" fill="#2a2a2a"/><circle cx="25.6" cy="17.6" r="2.3" fill="#2a2a2a"/><circle cx="10.4" cy="16" r="1.5" fill="#eeeeee"/><circle cx="25.6" cy="16" r="1.5" fill="#eeeeee"/><ellipse cx="18.4" cy="28.6" rx="3.8" ry="2.2" fill="#2a2420"/></svg><svg style="position:absolute;left:298px;top:1038px;" width="36" height="36" viewBox="0 0 36 36"><rect x="0" y="0" width="35" height="35" rx="2.5" fill="#f1f1f1"/><path d="M22 0 H32.5 Q35 0 35 2.5 V11 H22 Z" fill="#b0babd"/><rect x="22" y="11" width="13" height="12.5" fill="#627b83"/><path d="M12 35 L22 23.5 H35 V32.5 Q35 35 32.5 35 Z" fill="#4d6168"/><path d="M12 35 V25.5 Q12 23.5 14 23.5 H22 Z" fill="#c4c4c4"/><text x="2.5" y="12.5" font-family="Liberation Sans" font-size="10.5" fill="#3d3d3d">31</text></svg><svg style="position:absolute;left:370px;top:1038px;" width="40" height="40" viewBox="0 0 40 40"><rect x="0" y="0" width="35" height="35" rx="2.5" fill="#5d5d5d"/><rect x="0" y="0" width="17.5" height="17.5" fill="#a8a8a8"/><rect x="0" y="17.5" width="17.5" height="17.5" fill="#8a8a8a"/><path d="M5 9 H13 M9 5 V13" stroke="#eee" stroke-width="1.6"/><path d="M22 9 H30" stroke="#eee" stroke-width="1.6"/><path d="M5 22 L12 29 M12 22 L5 29" stroke="#eee" stroke-width="1.5"/><circle cx="26.5" cy="27" r="9.5" fill="#1fbfa0"/><path d="M22 25 H31 M22 29 H31" stroke="#eee" stroke-width="1.8"/></svg><svg style="position:absolute;left:446px;top:1038px;" width="36" height="38" viewBox="0 0 36 38"><rect x="0" y="0" width="28" height="35" rx="2" fill="#ededed"/><circle cx="23.3" cy="27.2" r="9" fill="#e84a3c"/><path d="M19.5 31 L26.3 24.2 M27.3 23.2 L28.6 21.9" stroke="#fff" stroke-width="2.8" stroke-linecap="butt"/><path d="M18.6 31.9 L20.2 30.3" stroke="#e84a3c" stroke-width="0.8"/></svg><svg style="position:absolute;left:514px;top:1040px;" width="36" height="32" viewBox="0 0 36 32"><rect x="0" y="0" width="35.5" height="30.5" rx="2" fill="#4d5e64"/><path d="M3 4 L5 5.5 L3 7 M6 7 H9" stroke="#cde" stroke-width="1" fill="none"/></svg><svg style="position:absolute;left:584px;top:1036px;" width="40" height="40" viewBox="0 0 40 40"><rect x="7" y="7" width="26" height="26" fill="none" stroke="#dccdd6" stroke-width="2.6"/><rect x="12" y="12" width="16" height="16" fill="none" stroke="#dccdd6" stroke-width="2.6"/><path d="M7 7 L12 12 M33 7 L28 12 M7 33 L12 28 M33 33 L28 28" stroke="#dccdd6" stroke-width="1.6"/><circle cx="12" cy="12" r="2.6" fill="#dccdd6"/><circle cx="28" cy="12" r="2.6" fill="#dccdd6"/><circle cx="12" cy="28" r="2.6" fill="#dccdd6"/><circle cx="28" cy="28" r="2.6" fill="#dccdd6"/><circle cx="6" cy="6" r="3.8" fill="#dccdd6"/><circle cx="34" cy="6" r="3.8" fill="#dccdd6"/><circle cx="6" cy="34" r="3.8" fill="#dccdd6"/><circle cx="34" cy="34" r="3.8" fill="#dccdd6"/></svg><svg style="position:absolute;left:656px;top:1037px;" width="40" height="38" viewBox="0 0 40 38"><path d="M12.5 7 V3.5 Q12.5 2 14 2 H24 Q25.5 2 25.5 3.5 V7" fill="none" stroke="#eee" stroke-width="2.6"/><rect x="1.5" y="7" width="35" height="27" rx="1.5" fill="#efefef"/><circle cx="29.5" cy="27.5" r="9" fill="#1f9ae6"/><path d="M29.5 22 V30 M25.8 27 L29.5 30.5 L33.2 27 M25 33 H34" stroke="#fff" stroke-width="1.8" fill="none"/></svg><svg style="position:absolute;left:720px;top:1032px;" width="130" height="48" viewBox="0 0 130 48"><defs><linearGradient id="xir" x1="0" y1="0" x2="0" y2="1"><stop offset="0" stop-color="#86c6dc"/><stop offset="1" stop-color="#3a6fb0"/></linearGradient></defs><g fill="#f08a62"><rect x="10.4" y="10.6" width="5.5" height="10" rx="2.75" transform="rotate(-45 13.1 15.6)"/><rect x="19.5" y="5.2" width="5.8" height="10.5" rx="2.9"/><rect x="30.4" y="5.2" width="5.8" height="10.5" rx="2.9"/><rect x="39.3" y="10.6" width="5.5" height="10" rx="2.75" transform="rotate(45 42 15.6)"/><path d="M9 26.4 Q18 13 28 13 Q38 13 47 26.4 Q38 40.8 28 40.8 Q18 40.8 9 26.4 Z"/></g><circle cx="27.8" cy="26.4" r="10.2" fill="url(#xir)"/><circle cx="28.8" cy="26.4" r="5.3" fill="#f39a66"/><path d="M32.5 23.6 L39.5 21.8 L39.5 31 L32.5 29.2 Z" fill="#f08a62"/><circle cx="99.5" cy="23.7" r="16.9" fill="#363636"/><path d="M82.5 22.8 L93.5 27.6 L92 35.8 L83.5 29.2 Z" fill="#e8e8ee"/><path d="M95.5 31.8 L104.5 21.5" stroke="#e8e8ee" stroke-width="6.5"/><circle cx="106" cy="19.6" r="6.8" fill="#e8e8ee"/><circle cx="106" cy="19.6" r="4.3" fill="#363636"/><circle cx="106" cy="19.6" r="3.3" fill="#e8e8ee"/><circle cx="95.5" cy="31.8" r="4.6" fill="#e8e8ee"/></svg><svg style="position:absolute;left:873px;top:1037px;" width="38" height="38" viewBox="0 0 38 38"><circle cx="18.6" cy="19" r="17.7" fill="#c8dcf2"/><path d="M18.6 11.2 L34.2 11.2 A17.7 17.7 0 0 0 3.9 9.1 L11.85 22.9 Z" fill="#5e8ec0"/><path d="M11.85 22.9 L3.9 9.1 A17.7 17.7 0 0 0 17.4 36.67 L25.35 22.9 Z" fill="#82b4e2"/><circle cx="18.6" cy="19" r="7.6" fill="#6d9dd6" stroke="#f4f8ff" stroke-width="1.6"/></svg><svg style="position:absolute;left:949px;top:1037px;" width="32" height="38" viewBox="0 0 32 38"><rect x="6" y="3" width="25" height="33" rx="2.5" fill="#e6e2de"/><rect x="1" y="1" width="26" height="35" rx="2.5" fill="#f3f0ec"/><rect x="5" y="4" width="7" height="8" fill="#bdbdbd"/><rect x="6" y="24" width="8" height="9" fill="#bababa"/><path d="M16.5 5 V9 M16.5 11 V16 M16.5 21 V25" stroke="#9a9a9a" stroke-width="1.6"/><rect x="0.5" y="15.5" width="31" height="3.6" fill="#e79a3c"/><rect x="3" y="32" width="24" height="3" rx="1.5" fill="#dcd8d4"/></svg><svg style="position:absolute;left:1020px;top:1038px;" width="32" height="37" viewBox="0 0 32 37"><path d="M3 0.8 H23.5 L31 8.3 V33.5 Q31 35.8 28.7 35.8 H3 Q0.7 35.8 0.7 33.5 V3.1 Q0.7 0.8 3 0.8 Z" fill="#f0ecee"/><path d="M23.5 0.8 L31 8.3 H25.5 Q23.5 8.3 23.5 6.3 Z" fill="#cbc6c8"/><rect x="13.3" y="8.9" width="5" height="18.2" rx="1" fill="#9c9c9c" transform="rotate(0 15.8 18)"/><rect x="13.3" y="8.9" width="5" height="18.2" rx="1" fill="#9c9c9c" transform="rotate(60 15.8 18)"/><rect x="13.3" y="8.9" width="5" height="18.2" rx="1" fill="#9c9c9c" transform="rotate(120 15.8 18)"/><circle cx="15.8" cy="18" r="6.8" fill="#9c9c9c"/><circle cx="15.8" cy="18" r="2.6" fill="#f0ecee"/></svg><svg style="position:absolute;left:1554px;top:1045px;" width="20" height="20" viewBox="0 0 20 20"><circle cx="9.5" cy="3" r="2.6" fill="#fff"/><path d="M1.5 7.5 H17.5" stroke="#fff" stroke-width="2.6"/><path d="M9.5 7 V12 M6.5 11 V18.5 M12.5 11 V18.5" stroke="#fff" stroke-width="3"/><rect x="6" y="8" width="7" height="5" fill="#fff"/></svg><div class="t " style="left:1622px;top:1047px;font-size:16px;color:#fff;font-weight:bold;">Feb 7</div><div class="t " style="left:1672px;top:1047px;font-size:16px;color:#fff;font-weight:bold;">04:10:00</div><svg style="position:absolute;left:1783px;top:1048px;" width="20" height="16" viewBox="0 0 20 16"><path d="M1 4.5 Q10 -3 19 4.5 L10 14.5 Z" fill="#fff"/></svg><svg style="position:absolute;left:1813px;top:1048px;" width="18" height="16" viewBox="0 0 18 16"><path d="M1.5 5 H4.5 L8 2 V14 L4.5 11 H1.5 Z" fill="none" stroke="#ddd" stroke-width="1.3"/><path d="M11 5 Q13 8 11 11 M13.5 3 Q16.5 8 13.5 13" fill="none" stroke="#999" stroke-width="1.2"/></svg><svg style="position:absolute;left:1844px;top:1046px;" width="14" height="19" viewBox="0 0 14 19"><rect x="4" y="0.5" width="5" height="2" fill="#fff"/><rect x="1" y="2.5" width="11" height="15.5" rx="1.5" fill="#fff"/><rect x="3" y="5" width="7" height="11" fill="#4a6a2a"/><path d="M7 6 L4.5 11 H6.5 L6 15 L8.5 10 H6.5 Z" fill="#9fe07a"/></svg><div class="t " style="left:1864px;top:1047px;font-size:16px;color:#fff;font-weight:bold;">57%</div></body></html>
